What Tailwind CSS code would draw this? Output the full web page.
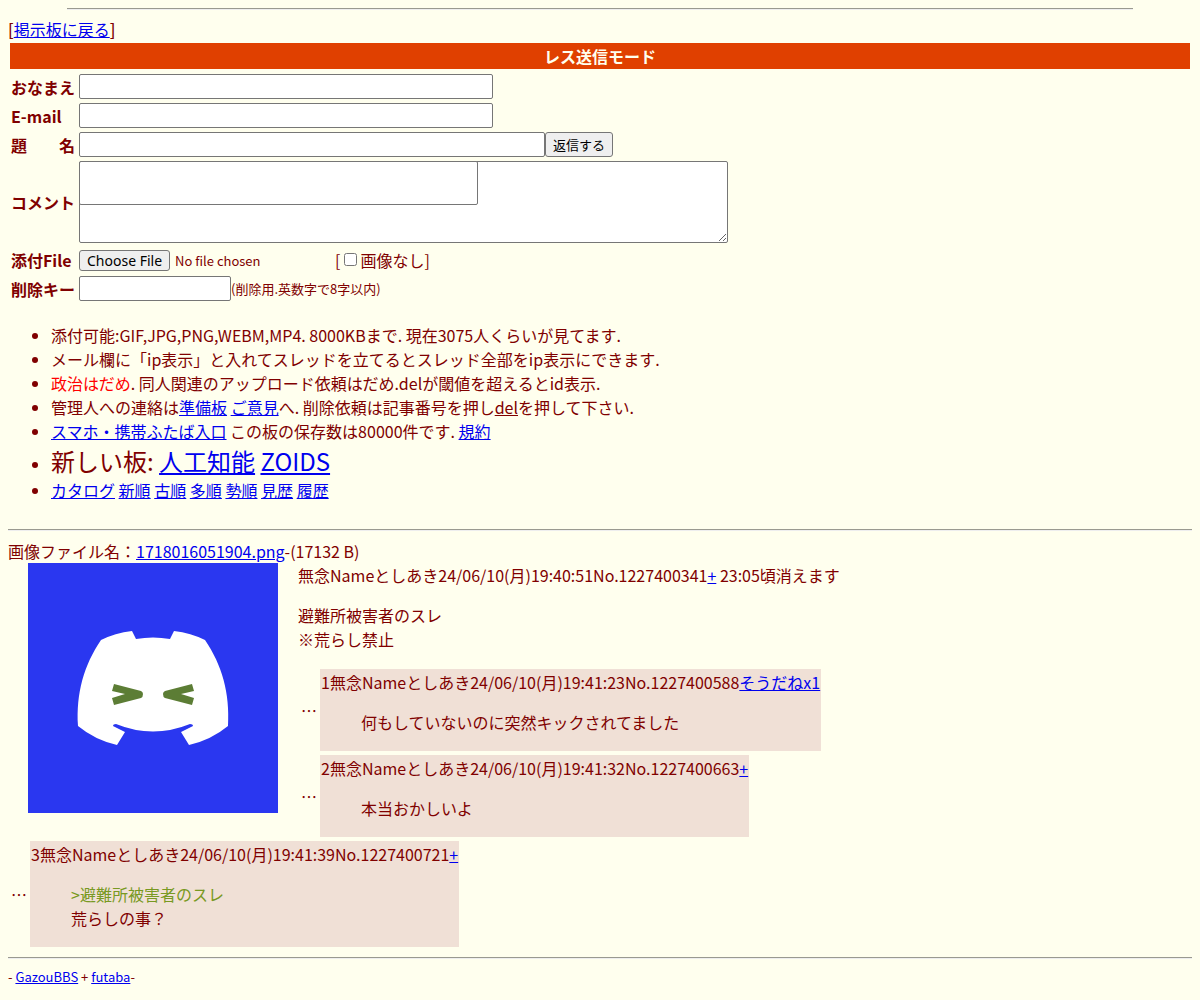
<!DOCTYPE html>
<html lang="ja">
<head>
  <meta charset="UTF-8">
  <meta name="viewport" content="width=device-width, initial-scale=1">
  <title>レス送信モード</title>
  <script src="https://cdn.jsdelivr.net/npm/@tailwindcss/browser@4"></script>
</head>
<body class="bg-[#ffffee] p-2 text-base leading-6 text-[#800000] font-['Noto_Sans_CJK_JP',sans-serif]">
  <hr class="mx-auto w-[90%] border-b border-t-[#9a9a90] border-b-[#eeeeee]">

  <div class="mt-[7px]"><span class="font-medium">[</span><a href="#" class="text-[#0000ee] underline">掲示板に戻る</a><span class="font-medium">]</span></div>
  <h1 class="mx-0.5 mt-0.5 bg-[#e04000] py-px text-center font-bold text-[#ffffee]">レス送信モード</h1>

  <!-- Reply form -->
  <form class="mt-[3px]">
    <table class="border-separate border-spacing-0">
      <tr>
        <th class="h-[29px] pr-1 pl-[3px] text-left"><label for="name">おなまえ</label></th>
        <td class="py-0.5"><input id="name" type="text" class="block h-[25px] w-[414px] rounded-xs border border-[#767676] bg-white px-0.5 text-sm text-black"></td>
      </tr>
      <tr>
        <th class="h-[29px] pr-1 pl-[3px] text-left"><label for="email">E-mail</label></th>
        <td class="py-0.5"><input id="email" type="text" class="block h-[25px] w-[414px] rounded-xs border border-[#767676] bg-white px-0.5 text-sm text-black"></td>
      </tr>
      <tr>
        <th class="h-[29px] pr-1 pl-[3px] text-left"><label for="sub">題　　名</label></th>
        <td class="py-0.5">
          <div class="flex">
            <input id="sub" type="text" class="block h-[25px] w-[466px] rounded-xs border border-[#767676] bg-white px-0.5 text-sm text-black">
            <button type="submit" class="h-[25px] rounded-[3px] border border-[#767676] bg-[#efefef] px-[7px] text-[13px] leading-5 text-black">返信する</button>
          </div>
        </td>
      </tr>
      <tr>
        <th class="h-[29px] pr-1 pl-[3px] text-left"><label for="com">コメント</label></th>
        <td class="py-0.5">
          <div class="relative w-[649px]">
            <textarea id="com" class="block h-[82px] w-full resize rounded-xs border border-[#767676] bg-white p-0.5 text-sm text-black"></textarea>
            <textarea aria-label="コメント" class="absolute top-0 left-0 h-11 w-[399px] resize-none rounded-xs border border-[#767676] bg-white p-0.5 text-sm text-black"></textarea>
          </div>
        </td>
      </tr>
      <tr>
        <th class="h-[29px] pr-1 pl-[3px] text-left"><label for="upfile">添付File</label></th>
        <td>
          <div class="flex items-center">
            <input id="upfile" type="file" class="w-64 pt-0.5 text-[13px] file:mr-[5px] file:h-[21px] file:rounded-[3px] file:border file:border-solid file:border-[#767676] file:bg-[#efefef] file:px-[7px] file:font-['Noto_Sans'] file:text-sm file:leading-[18px] file:text-black">
            <span>[</span>
            <input id="textonly" type="checkbox" class="mr-[3px] ml-1 size-[13px]">
            <label for="textonly">画像なし</label><span>]</span>
          </div>
        </td>
      </tr>
      <tr>
        <th class="h-[29px] pr-1 pl-[3px] text-left"><label for="pwd">削除キー</label></th>
        <td class="py-0.5">
          <div class="flex items-center">
            <input id="pwd" type="password" class="h-[25px] w-[152px] rounded-xs border border-[#767676] bg-white px-0.5 text-sm text-black">
            <span class="text-[13px]">(削除用.英数字で8字以内)</span>
          </div>
        </td>
      </tr>
    </table>
  </form>

  <ul class="mt-5 list-disc pl-[43px]">
    <li>添付可能:GIF,JPG,PNG,WEBM,MP4. 8000KBまで. 現在3075人くらいが見てます.</li>
    <li>メール欄に「ip表示」と入れてスレッドを立てるとスレッド全部をip表示にできます.</li>
    <li><span class="text-[#ff0000]">政治はだめ</span>. 同人関連のアップロード依頼はだめ.delが閾値を超えるとid表示.</li>
    <li>管理人への連絡は<a href="#" class="text-[#0000ee] underline">準備板</a> <a href="#" class="text-[#0000ee] underline">ご意見</a>へ. 削除依頼は記事番号を押し<u>del</u>を押して下さい.</li>
    <li><a href="#" class="text-[#0000ee] underline">スマホ・携帯ふたば入口</a> この板の保存数は80000件です. <a href="#" class="text-[#0000ee] underline">規約</a></li>
    <li><span class="text-2xl leading-[35px]">新しい板: <a href="#" class="text-[#0000ee] underline">人工知能</a> <a href="#" class="text-[#0000ee] underline">ZOIDS</a></span></li>
    <li>
      <a href="#" class="text-[#0000ee] underline">カタログ</a>
      <a href="#" class="text-[#0000ee] underline">新順</a>
      <a href="#" class="text-[#0000ee] underline">古順</a>
      <a href="#" class="text-[#0000ee] underline">多順</a>
      <a href="#" class="text-[#0000ee] underline">勢順</a>
      <a href="#" class="text-[#0000ee] underline">見歴</a>
      <a href="#" class="text-[#0000ee] underline">履歴</a>
    </li>
  </ul>

  <hr class="mt-[27px] border-b border-t-[#9a9a90] border-b-[#eeeeee]">

  <!-- Thread -->
  <main class="mt-2">
    <div>画像ファイル名：<a href="#" class="text-[#0000ee] underline">1718016051904.png</a>-(17132 B)</div>
    <div class="flex items-start gap-5 pl-5">
      <a href="#" class="shrink-0">
        <svg class="block size-[250px]" viewBox="0 0 250 250" role="img" aria-label="1718016051904.png">
          <rect width="250" height="250" fill="#2a37f0"/>
          <path fill="#fff" d="M104 68 L108 76 Q125 73 142 76 L146 68 Q163 70 177 77 C194 102 202 130 200 163 Q183 177 161 182 L153 169 L165 163 Q165 161 162 161 Q125 176 88 161 Q85 161 85 163 L97 169 L89 182 Q67 177 50 163 C48 130 56 102 73 77 Q87 70 104 68 Z"/>
          <path fill="#5c7d35" d="M86 121 L113 128 Q115 129 115 131 Q115 134 113 135 L86 142 L84 135 L97 131 L84 128 Z M164 121 L137 128 Q135 129 135 131 Q135 134 137 135 L164 142 L166 135 L153 131 L166 128 Z"/>
        </svg>
      </a>
      <div>
        <div>無念Nameとしあき24/06/10(月)19:40:51No.1227400341<a href="#" class="text-[#0000ee] underline">+</a> 23:05頃消えます</div>
        <p class="mt-4 mb-[18px]">避難所被害者のスレ<br>※荒らし禁止</p>
        <div class="flex items-center gap-[3px] pl-[3px]">
          <span>…</span>
          <article class="bg-[#f0e0d6] p-px">
            <div>1無念Nameとしあき24/06/10(月)19:41:23No.1227400588<a href="#" class="text-[#0000ee] underline">そうだねx1</a></div>
            <p class="mx-10 my-4">何もしていないのに突然キックされてました</p>
          </article>
        </div>
        <div class="mt-1 flex items-center gap-[3px] pl-[3px]">
          <span>…</span>
          <article class="bg-[#f0e0d6] p-px">
            <div>2無念Nameとしあき24/06/10(月)19:41:32No.1227400663<a href="#" class="text-[#0000ee] underline">+</a></div>
            <p class="mx-10 my-4">本当おかしいよ</p>
          </article>
        </div>
      </div>
    </div>
    <div class="mt-1 flex items-center gap-[3px] pl-[3px]">
      <span>…</span>
      <article class="bg-[#f0e0d6] p-px">
        <div>3無念Nameとしあき24/06/10(月)19:41:39No.1227400721<a href="#" class="text-[#0000ee] underline">+</a></div>
        <p class="mx-10 my-4"><span class="text-[#789922]">&gt;避難所被害者のスレ</span><br>荒らしの事？</p>
      </article>
    </div>
  </main>

  <hr class="mt-2.5 border-b border-t-[#9a9a90] border-b-[#eeeeee]">
  <footer class="mt-2 text-[13px] leading-5">- <a href="#" class="text-[#0000ee] underline">GazouBBS</a> + <a href="#" class="text-[#0000ee] underline">futaba</a>-</footer>
</body>
</html>
